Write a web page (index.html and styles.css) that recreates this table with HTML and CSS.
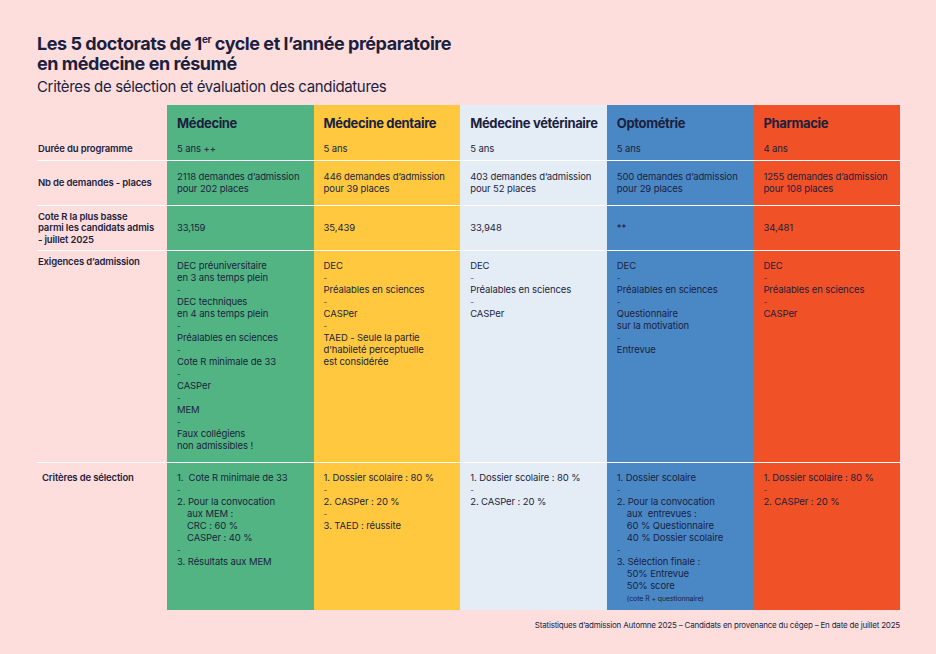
FILE: index.html
```html
<!DOCTYPE html>
<html lang="fr">
<head>
<meta charset="utf-8">
<title>Les 5 doctorats de 1er cycle</title>
<link rel="stylesheet" href="styles.css">
</head>
<body>
<div class="page">
  <header class="intro">
    <h1 class="title">Les 5 doctorats de 1<sup>er</sup> cycle et l’année préparatoire<br>en médecine en résumé</h1>
    <p class="subtitle">Critères de sélection et évaluation des candidatures</p>
  </header>

  <div class="grid">
    <!-- header row -->
    <div class="cell lab"></div>
    <div class="cell green head"><h2>Médecine</h2></div>
    <div class="cell yellow head"><h2>Médecine dentaire</h2></div>
    <div class="cell pale head"><h2>Médecine vétérinaire</h2></div>
    <div class="cell blue head"><h2>Optométrie</h2></div>
    <div class="cell orange head"><h2>Pharmacie</h2></div>

    <!-- duration -->
    <div class="cell lab dur">Durée du programme</div>
    <div class="cell green dur">5 ans ++</div>
    <div class="cell yellow dur">5 ans</div>
    <div class="cell pale dur">5 ans</div>
    <div class="cell blue dur">5 ans</div>
    <div class="cell orange dur">4 ans</div>

    <!-- demands -->
    <div class="cell lab mid sep">Nb de demandes - places</div>
    <div class="cell green mid sep">2118 demandes d’admission<br>pour 202 places</div>
    <div class="cell yellow mid sep">446 demandes d’admission<br>pour 39 places</div>
    <div class="cell pale mid sep">403 demandes d’admission<br>pour 52 places</div>
    <div class="cell blue mid sep">500 demandes d’admission<br>pour 29 places</div>
    <div class="cell orange mid sep">1255 demandes d’admission<br>pour 108 places</div>

    <!-- cote R -->
    <div class="cell lab mid sep tight">Cote R la plus basse<br>parmi les candidats admis<br>- juillet 2025</div>
    <div class="cell green mid sep">33,159</div>
    <div class="cell yellow mid sep">35,439</div>
    <div class="cell pale mid sep">33,948</div>
    <div class="cell blue mid sep">**</div>
    <div class="cell orange mid sep">34,481</div>

    <!-- exigences -->
    <div class="cell lab sep req-lab">Exigences d’admission</div>
    <div class="cell green sep top">DEC préuniversitaire<br>en 3 ans temps plein<br><span class="dash">-</span><br>DEC techniques<br>en 4 ans temps plein<br><span class="dash">-</span><br>Préalables en sciences<br><span class="dash">-</span><br>Cote R minimale de 33<br><span class="dash">-</span><br>CASPer<br><span class="dash">-</span><br>MEM<br><span class="dash">-</span><br>Faux collégiens<br>non admissibles !</div>
    <div class="cell yellow sep top">DEC<br><span class="dash">-</span><br>Préalables en sciences<br><span class="dash">-</span><br>CASPer<br><span class="dash">-</span><br>TAED - Seule la partie<br>d’habileté perceptuelle<br>est considérée</div>
    <div class="cell pale sep top">DEC<br><span class="dash">-</span><br>Préalables en sciences<br><span class="dash">-</span><br>CASPer</div>
    <div class="cell blue sep top">DEC<br><span class="dash">-</span><br>Préalables en sciences<br><span class="dash">-</span><br>Questionnaire<br>sur la motivation<br><span class="dash">-</span><br>Entrevue</div>
    <div class="cell orange sep top">DEC<br><span class="dash">-</span><br>Préalables en sciences<br><span class="dash">-</span><br>CASPer</div>

    <!-- criteres -->
    <div class="cell lab sep top crit-lab">Critères de sélection</div>
    <div class="cell green sep top">1.&nbsp; Cote R minimale de 33<br><span class="dash">-</span><br>2. Pour la convocation<br><span class="ind">aux MEM :</span><br><span class="ind">CRC : 60 %</span><br><span class="ind">CASPer : 40 %</span><br><span class="dash">-</span><br>3. Résultats aux MEM</div>
    <div class="cell yellow sep top">1. Dossier scolaire : 80 %<br><span class="dash">-</span><br>2. CASPer : 20 %<br><span class="dash">-</span><br>3. TAED : réussite</div>
    <div class="cell pale sep top">1. Dossier scolaire : 80 %<br><span class="dash">-</span><br>2. CASPer : 20 %</div>
    <div class="cell blue sep top">1. Dossier scolaire<br><span class="dash">-</span><br>2. Pour la convocation<br><span class="ind">aux&nbsp; entrevues :</span><br><span class="ind">60 % Questionnaire</span><br><span class="ind">40 % Dossier scolaire</span><br><span class="dash">-</span><br>3. Sélection finale :<br><span class="ind">50% Entrevue</span><br><span class="ind">50% score</span><br><span class="ind small">(cote R + questionnaire)</span></div>
    <div class="cell orange sep top">1. Dossier scolaire : 80 %<br><span class="dash">-</span><br>2. CASPer : 20 %</div>
  </div>

  <p class="footer">Statistiques d’admission Automne 2025 – Candidats en provenance du cégep – En date de juillet 2025</p>
</div>
</body>
</html>
```

FILE: styles.css
```css
html, body {
  margin: 0;
  padding: 0;
  background: #fddedd;
}

body {
  font-family: "Inter", "Noto Sans", sans-serif;
  color: #1c1f3e;
}

.page {
  width: 936px;
  height: 654px;
  box-sizing: border-box;
  padding: 34px 36px 0 37px;
  display: flex;
  flex-direction: column;
}

.intro {
  display: flex;
  flex-direction: column;
}

.title {
  margin: 0;
  font-size: 18px;
  line-height: 20px;
  font-weight: 700;
  letter-spacing: -0.45px;
}

.title sup {
  font-size: 10px;
  line-height: 0;
  vertical-align: 7px;
}

.subtitle {
  margin: 4px 0 0;
  font-size: 15px;
  line-height: 18px;
  font-weight: 400;
  letter-spacing: -0.35px;
}

.grid {
  margin-top: 9px;
  display: grid;
  grid-template-columns: 130px repeat(5, 1fr);
  grid-template-rows: 31px 24px 45px 45px 212px 148px;
  font-size: 9.5px;
  line-height: 12px;
  letter-spacing: -0.1px;
}

.cell {
  box-sizing: border-box;
  padding-left: 10px;
  padding-right: 4px;
}

.cell.lab {
  padding-left: 1px;
  font-weight: 600;
  font-size: 9.5px;
  letter-spacing: -0.15px;
}

.green { background: #52b483; }
.yellow { background: #ffc83f; }
.pale { background: #e4ecf6; }
.blue { background: #4a88c5; }
.orange { background: #f05126; }

.head {
  padding-top: 10px;
}

.head h2 {
  margin: 0;
  font-size: 13px;
  line-height: 16px;
  font-weight: 700;
  letter-spacing: -0.35px;
}

.dur {
  padding-top: 7px;
}

.sep {
  border-top: 1px solid #ffffff;
}

.mid {
  display: flex;
  align-items: center;
}

.cell.tight {
  line-height: 11.5px;
}

.top {
  padding-top: 9px;
}

.req-lab {
  padding-top: 5px;
}

.cell.crit-lab {
  padding-left: 5px;
}

.dash {
  font-size: 8px;
  opacity: 0.8;
}

.ind {
  padding-left: 10px;
}

.ind.small {
  font-size: 7px;
}

.footer {
  margin: 10px 0 0;
  font-size: 8px;
  line-height: 10px;
  text-align: right;
  letter-spacing: -0.2px;
}
```
